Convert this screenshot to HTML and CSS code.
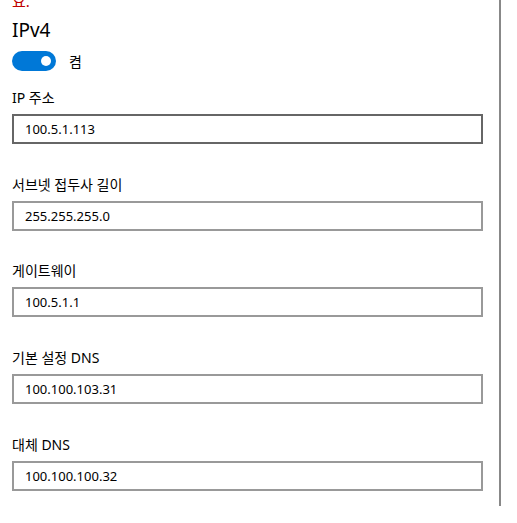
FILE: index.html
```html
<!DOCTYPE html>
<html lang="ko">
<head>
<meta charset="utf-8">
<link rel="stylesheet" href="styles.css">
</head>
<body>
<div class="panel">
  <div class="warn">요.</div>
  <div class="title">IPv4</div>
  <div class="toggle-row">
    <span class="toggle"><span class="knob"></span></span>
    <span class="toggle-label">켬</span>
  </div>
  <div class="field">
    <div class="label">IP 주소</div>
    <div class="input focused">100.5.1.113</div>
  </div>
  <div class="field">
    <div class="label">서브넷 접두사 길이</div>
    <div class="input">255.255.255.0</div>
  </div>
  <div class="field">
    <div class="label">게이트웨이</div>
    <div class="input">100.5.1.1</div>
  </div>
  <div class="field">
    <div class="label">기본 설정 DNS</div>
    <div class="input">100.100.103.31</div>
  </div>
  <div class="field">
    <div class="label">대체 DNS</div>
    <div class="input">100.100.100.32</div>
  </div>
</div>
</body>
</html>
```
FILE: styles.css
```css
html, body {
  margin: 0;
  padding: 0;
  background: #fff;
}
body {
  font-family: "Noto Sans", "Noto Sans CJK KR", sans-serif;
  color: #000;
  overflow: hidden;
}
.panel {
  width: 487px;
  height: 506px;
  padding-left: 12px;
  border-right: 2px solid #888;
  overflow: hidden;
}
.warn {
  color: #c00000;
  font-size: 15px;
  line-height: 20px;
  margin-top: -9px;
}
.title {
  font-size: 19px;
  line-height: 28px;
  margin-top: 5px;
}
.toggle-row {
  display: flex;
  align-items: center;
  gap: 13px;
  margin-top: 7px;
  height: 20px;
}
.toggle {
  width: 44px;
  height: 20px;
  border-radius: 10px;
  background: #0078d7;
  display: flex;
  align-items: center;
  justify-content: flex-end;
  padding-right: 5px;
  box-sizing: border-box;
}
.knob {
  width: 10px;
  height: 10px;
  border-radius: 50%;
  background: #fff;
}
.toggle-label {
  font-size: 14px;
}
.field {
  margin-top: 17px;
}
.field + .field {
  margin-top: 30.7px;
}
.label {
  font-size: 14px;
  line-height: 20px;
}
.input {
  margin-top: 6px;
  width: 471px;
  height: 30px;
  box-sizing: border-box;
  border: 2px solid #999;
  padding-left: 11px;
  font-size: 13px;
  line-height: 26px;
}
.input.focused {
  border-color: #666;
}
```
